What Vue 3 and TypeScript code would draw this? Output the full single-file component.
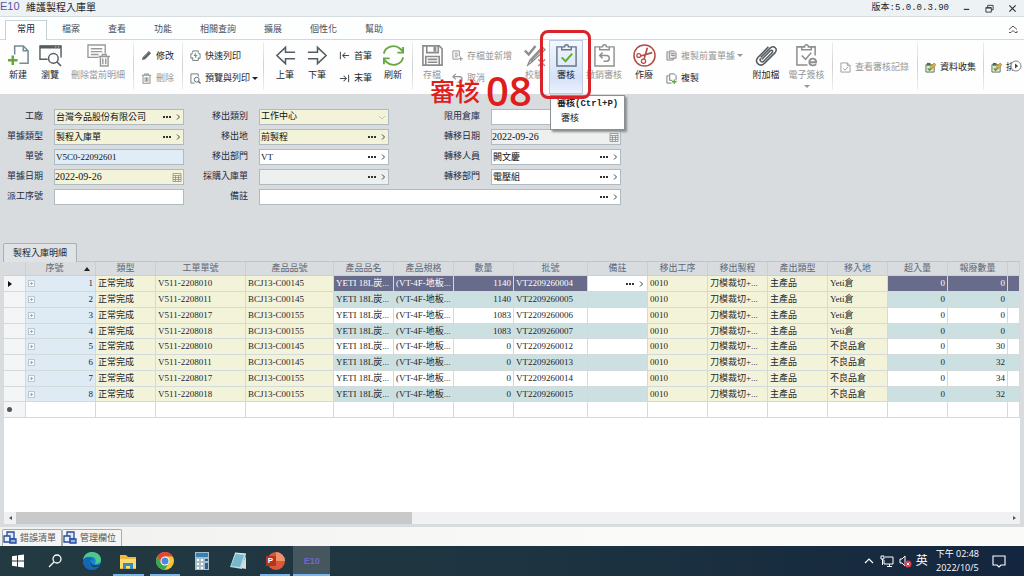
<script setup lang="ts">
import { ref } from 'vue'

interface Tool { label: string; icon?: string; off?: boolean; drop?: boolean; hot?: boolean }
interface Group { kind: 'big' | 'small' | 'sep'; size?: string; tools?: Tool[] }
interface Field {
  id: string
  label: string
  value: string
  type: 'lookup' | 'text' | 'date' | 'select'
  tone: string
  wide?: boolean
}

const menus = [
  { label: '檔案', size: 'm2' },
  { label: '查看', size: 'm2' },
  { label: '功能', size: 'm2' },
  { label: '相關查詢', size: 'm4' },
  { label: '擴展', size: 'm2' },
  { label: '個性化', size: 'm3' },
  { label: '幫助', size: 'm2' },
]

const ribbon: Group[] = [
  { kind: 'big', size: 'w32', tools: [{ label: '新建', icon: 'new' }] },
  { kind: 'big', size: 'w32', tools: [{ label: '瀏覽', icon: 'browse' }] },
  { kind: 'big', size: 'w64', tools: [{ label: '刪除當前明細', icon: 'deldetail', off: true }] },
  { kind: 'sep' },
  { kind: 'small', size: 'w40', tools: [{ label: '修改', icon: 'pencil' }, { label: '刪除', icon: 'trash', off: true }] },
  { kind: 'sep' },
  { kind: 'small', size: 'w72', tools: [{ label: '快速列印', icon: 'quick' }, { label: '預覽與列印', icon: 'preview', drop: true }] },
  { kind: 'sep' },
  { kind: 'big', size: 'w32', tools: [{ label: '上筆', icon: 'prev' }] },
  { kind: 'big', size: 'w32', tools: [{ label: '下筆', icon: 'next' }] },
  { kind: 'small', size: 'w44', tools: [{ label: '首筆', icon: 'first' }, { label: '末筆', icon: 'last' }] },
  { kind: 'big', size: 'w32', tools: [{ label: '刷新', icon: 'refresh' }] },
  { kind: 'sep' },
  { kind: 'big', size: 'w28', tools: [{ label: '存檔', icon: 'save', off: true }] },
  { kind: 'small', size: 'w74', tools: [{ label: '存檔並新增', icon: 'saveadd', off: true }, { label: '取消', icon: 'undo', off: true }] },
  { kind: 'big', size: 'w28', tools: [{ label: '校驗', icon: 'verify', off: true }] },
  { kind: 'big', size: 'w36', tools: [{ label: '審核', icon: 'approve', hot: true }] },
  { kind: 'big', size: 'w40', tools: [{ label: '撤銷審核', icon: 'revoke', off: true }] },
  { kind: 'big', size: 'w40', tools: [{ label: '作廢', icon: 'void' }] },
  { kind: 'small', size: 'w84', tools: [{ label: '複製前置單據', icon: 'copyprev', off: true, drop: true }, { label: '複製', icon: 'copy' }] },
  { kind: 'big', size: 'w36', tools: [{ label: '附加檔', icon: 'clip' }] },
  { kind: 'big', size: 'w45', tools: [{ label: '電子簽核', icon: 'esign', off: true, drop: true }] },
  { kind: 'sep' },
  { kind: 'small', size: 'w76', tools: [{ label: '查看審核記錄', icon: 'log', off: true }] },
  { kind: 'sep' },
  { kind: 'small', size: 'w57', tools: [{ label: '資料收集', icon: 'collect' }] },
  { kind: 'sep' },
  { kind: 'small', size: 'rest', tools: [{ label: '排', icon: 'collect' }] },
]

const fields = ref<Field[]>([
  { id: 'factory', label: '工廠', value: '台灣今品股份有限公司', type: 'lookup', tone: 'yellow' },
  { id: 'outkind', label: '移出類別', value: '工作中心', type: 'select', tone: 'yellow' },
  { id: 'limit', label: '限用倉庫', value: '', type: 'text', tone: 'white' },
  { id: 'doctype', label: '單據類型', value: '製程入庫單', type: 'lookup', tone: 'yellow' },
  { id: 'outplace', label: '移出地', value: '前製程', type: 'lookup', tone: 'yellow' },
  { id: 'movedate', label: '轉移日期', value: '2022-09-26', type: 'date', tone: 'grey' },
  { id: 'docno', label: '單號', value: 'V5C0-22092601', type: 'text', tone: 'blue' },
  { id: 'outdept', label: '移出部門', value: 'VT', type: 'lookup', tone: 'white' },
  { id: 'moveman', label: '轉移人員', value: '闕文慶', type: 'lookup', tone: 'white' },
  { id: 'docdate', label: '單據日期', value: '2022-09-26', type: 'date', tone: 'yellow' },
  { id: 'purchase', label: '採購入庫單', value: '', type: 'lookup', tone: 'grey' },
  { id: 'movedept', label: '轉移部門', value: '電壓組', type: 'lookup', tone: 'white' },
  { id: 'dispatch', label: '派工序號', value: '', type: 'text', tone: 'white' },
  { id: 'remark', label: '備註', value: '', type: 'lookup', tone: 'white', wide: true },
])

const heads = ['類型', '工單單號', '產品品號', '產品品名', '產品規格', '數量', '批號', '備註', '移出工序', '移出製程', '產出類型', '移入地', '超入量', '報廢數量']
const cols = ['ind', 'seq', 'std', 'order', 'item', 'std', 'std', 'std', 'lot', 'std', 'std', 'std', 'std', 'std', 'std', 'std', 'tail']
const rows = [
  ['V511-2208010', 'BCJ13-C00145', '1140', 'VT2209260004', 'Yeti倉', '0'],
  ['V511-2208011', 'BCJ13-C00145', '1140', 'VT2209260005', 'Yeti倉', '0'],
  ['V511-2208017', 'BCJ13-C00155', '1083', 'VT2209260006', 'Yeti倉', '0'],
  ['V511-2208018', 'BCJ13-C00155', '1083', 'VT2209260007', 'Yeti倉', '0'],
  ['V511-2208010', 'BCJ13-C00145', '0', 'VT2209260012', '不良品倉', '30'],
  ['V511-2208011', 'BCJ13-C00145', '0', 'VT2209260013', '不良品倉', '32'],
  ['V511-2208017', 'BCJ13-C00155', '0', 'VT2209260014', '不良品倉', '34'],
  ['V511-2208018', 'BCJ13-C00155', '0', 'VT2209260015', '不良品倉', '32'],
]
const apps = ['win', 'search', 'edge', 'explorer', 'chrome', 'calc', 'notes', 'ppt']
const running = ['explorer', 'chrome', 'ppt']
</script>

<template>
  <div class="window">
    <svg class="defs" aria-hidden="true">
      <symbol id="new" viewBox="0 0 24 24"><path d="M8 11V2h9l5 5v13H13M17 2v5h5" fill="none" stroke="#748a99" stroke-width="1.6" /><path d="M6 12v10M1 17h10" stroke="#65a839" stroke-width="2.6" /></symbol>
      <symbol id="browse" viewBox="0 0 24 24"><path d="M9 16H1V2h22v12" fill="none" stroke="#555d62" stroke-width="1.5" /><path d="M1 3.2h22" stroke="#555d62" stroke-width="3" /><path d="M17 3h1M20 3h1" stroke="#fff" /><circle cx="15" cy="15" r="5" fill="#fff" stroke="#555d62" stroke-width="1.5" /><path d="M18.500 18.500L23 23" stroke="#555d62" stroke-width="1.7" /></symbol>
      <symbol id="deldetail" viewBox="0 0 24 24"><path d="M12 14H1V1h18v9M4 5h12M4 8h12M4 11h8" fill="none" stroke="#999" stroke-width="1.4" /><path d="M12 13h12M16 13v-2h4v2M14 13v10h8V13M16.500 15v6M19.500 15v6" fill="none" stroke="#999" stroke-width="1.5" /></symbol>
      <symbol id="pencil" viewBox="0 0 12 12"><path d="M1 11l1-3.500L8.500 1 11 3.500 4.500 10z" fill="#5d6468" /><path d="M2.500 8l5.500-5.500" stroke="#b7bbbd" stroke-width=".7" /></symbol>
      <symbol id="trash" viewBox="0 0 12 12"><path d="M1 2.500h10M4 2.500V1h4v1.500M2.200 3v8.200h7.600V3M4.500 4.500v5M6 4.500v5M7.500 4.500v5" fill="none" stroke="#929292" stroke-width="1.1" /></symbol>
      <symbol id="quick" viewBox="0 0 12 12"><path d="M3 3V1h6v2M3 9H1V4h2M9 4h2v5H9M3 8v3.500h6V8" fill="none" stroke="#69757b" /><path d="M6.500 2.500L3.800 6.500h2L5.200 9.500 8.300 5.500H6.200z" fill="#62a83c" /></symbol>
      <symbol id="preview" viewBox="0 0 12 12"><path d="M5 11H1V1h8v3" fill="none" stroke="#69757b" /><circle cx="7.300" cy="7.300" r="2.600" fill="#fff" stroke="#59636a" /><path d="M9 9l2.500 2.500" stroke="#59636a" stroke-width="1.3" /></symbol>
      <symbol id="prev" viewBox="0 0 24 24"><path d="M22 8.500H12V3.500L3 12l9 8.500v-5h10" fill="none" stroke="#555d62" stroke-width="1.6" /></symbol>
      <symbol id="next" viewBox="0 0 24 24"><path d="M2 8.500h10V3.500l9 8.500-9 8.500v-5H2" fill="none" stroke="#555d62" stroke-width="1.6" /></symbol>
      <symbol id="first" viewBox="0 0 12 12"><path d="M1.500 2v8M11 6H4M7 3L4 6l3 3" fill="none" stroke="#444c52" stroke-width="1.1" /></symbol>
      <symbol id="last" viewBox="0 0 12 12"><path d="M10.500 2v8M1 6h7M5 3l3 3-3 3" fill="none" stroke="#444c52" stroke-width="1.1" /></symbol>
      <symbol id="refresh" viewBox="0 0 24 24"><path d="M2 10a10 9 0 0 1 17-5l3 3M22 3v6h-6M22 14a10 9 0 0 1-17 5l-3-3M2 21v-6h6" fill="none" stroke="#69a744" stroke-width="2" /></symbol>
      <symbol id="save" viewBox="0 0 24 24"><path d="M2 2h17l3 3v17H2zM6 2v7h12V2M5 22v-9h14v9M7 16h10M7 19h10" fill="none" stroke="#8c8c8c" stroke-width="1.700" /><path d="M13 3h3v5h-3z" fill="#8c8c8c" /></symbol>
      <symbol id="saveadd" viewBox="0 0 12 12"><path d="M7 10H1V1h7v6M3 3.500h3M3 5.500h4M3 7.500h3M9.500 7v5M7 9.500h5" fill="none" stroke="#8f8f8f" /></symbol>
      <symbol id="undo" viewBox="0 0 12 12"><path d="M4 1L1 4l3 3M1 4h7c4 0 4 6 0 6H6" fill="none" stroke="#8f8f8f" stroke-width="1.200" /></symbol>
      <symbol id="verify" viewBox="0 0 24 24"><path d="M2 7l4 4 7-9" fill="none" stroke="#8c8c8c" stroke-width="2.500" /><path d="M5 22l2-5L20 3l3 3L9 19zM8 18L21 4" fill="#ddd" stroke="#8c8c8c" stroke-width="1.300" /><path d="M16 16l7 7M23 16l-7 7" stroke="#b89090" stroke-width="1.700" /></symbol>
      <symbol id="approve" viewBox="0 0 24 24"><path d="M7 3H2v20h20V3h-5M7 5V3h3c0-3 4-3 4 0h3v3H7z" fill="none" stroke="#667685" stroke-width="1.500" /><path d="M7 14l4 4 7-8" fill="none" stroke="#5bb030" stroke-width="2" /></symbol>
      <symbol id="revoke" viewBox="0 0 24 24"><path d="M7 3H2v20h20V3h-5M7 5V3h3c0-3 4-3 4 0h3v3H7zM10 9l-3 3 3 3M7 12h7c4 0 4 6 0 6h-3" fill="none" stroke="#8f8f8f" stroke-width="1.500" /></symbol>
      <symbol id="void" viewBox="0 0 24 24"><circle cx="12" cy="12" r="11" fill="none" stroke="#b44c47" stroke-width="1.600" /><circle cx="6" cy="12" r="2" fill="none" stroke="#b44c47" stroke-width="1.300" /><circle cx="11" cy="18" r="2.200" fill="none" stroke="#b44c47" stroke-width="1.300" /><path d="M8 12.500L20 9M11.500 16L15 4" stroke="#b44c47" stroke-width="1.700" /></symbol>
      <symbol id="copyprev" viewBox="0 0 12 12"><path d="M3 2H1v9h7V9M4 1h5l2 2v6H4zM5.500 4h4M5.500 6h4" fill="#ddd" stroke="#8b8b8b" /></symbol>
      <symbol id="copy" viewBox="0 0 12 12"><path d="M3 3H1v8h5M4 3V1h5l2 2v5M4 3v5h3" fill="none" stroke="#68777f" /><path d="M9 7v5M6.500 9.500h5" stroke="#5fae36" stroke-width="1.500" /></symbol>
      <symbol id="clip" viewBox="0 0 24 24"><path d="M6 14L16 4c4-3 8 1 5 5L10 20c-5 5-11-1-7-6L14 3M7 16l9-9c2-1 3 0 2 2l-9 9c-2 2-5-1-3-3" fill="none" stroke="#565d63" stroke-width="1.600" /></symbol>
      <symbol id="esign" viewBox="0 0 24 24"><path d="M7 3H2v19h11M17 3h4v9M7 5V3h3c0-3 4-3 4 0h3v3H7zM7 12l4 4 6-7" fill="none" stroke="#8f8f8f" stroke-width="1.600" /><path d="M15 19h7c0-5-7-5-7 0 0 4 5 4 7 2" fill="none" stroke="#8f8f8f" stroke-width="2" /></symbol>
      <symbol id="log" viewBox="0 0 12 12"><path d="M1 1h7l3 3v7H1zM8 1v3h3M3.500 7l2 2 3-3.500" fill="none" stroke="#999" /></symbol>
      <symbol id="collect" viewBox="0 0 12 12"><path d="M1 3h9v8H1z" fill="#dfead9" stroke="#587452" /><path d="M2 1h4v3H2z" fill="#496f55" /><path d="M3 7l2 2 3-3" fill="none" stroke="#4c9942" stroke-width="1.400" /><path d="M5 8l1-3 4-4 2 2-4 4z" fill="#e3ae3e" stroke="#8b7144" stroke-width=".6" /></symbol>
      <symbol id="cal" viewBox="0 0 10 10"><path d="M1 1.500h8v8H1zM1 3.500h8M3.500 3.500v6M6.500 3.500v6M1 5.500h8M1 7.500h8" fill="none" stroke="#8f8f88" stroke-width=".8" /></symbol>
      <symbol id="panel" viewBox="0 0 14 14"><path d="M4 1h7v7H4z" fill="#dbe7fa" stroke="#284b9b" stroke-width="1.300" /><path d="M1 5h6v6H1z" fill="#e9f1ff" stroke="#284b9b" stroke-width="1.300" /><path d="M7 8h6v4H7z" fill="#91b2ea" stroke="#284b9b" stroke-width="1.300" /></symbol>
      <symbol id="win" viewBox="0 0 20 20"><path d="M4 5.200l5-.7v5H4zM10 4.300l6-.8v6h-6zM4 10.500h5v5l-5-.7zM10 10.500h6v6l-6-.8z" fill="#fff" /></symbol>
      <symbol id="search" viewBox="0 0 20 20"><circle cx="12" cy="8" r="4" fill="none" stroke="#fff" stroke-width="1.300" /><path d="M9 11l-5 5" stroke="#fff" stroke-width="1.300" /></symbol>
      <symbol id="edge" viewBox="0 0 20 20"><circle cx="10" cy="10" r="9" fill="#1684d0" /><path d="M1 9C2 3 6 1 10 1c6 0 9 4 9 8 0 3-3 4-6 4 2-5-1-8-5-7-3 0-6 1-7 3z" fill="#4fc78c" /><path d="M1 9c2-4 9-4 10 0-3-1-4 2-3 4 2 4 6 4 9 2-3 5-11 5-14 1C1 14 1 11 1 9z" fill="#1268b7" /><path d="M10 9c-2 1-1 4 1 5 3 1 6 0 7-1l-1 2c-3 2-7 1-8-1-1-2-1-4 1-5z" fill="#203a43" /></symbol>
      <symbol id="explorer" viewBox="0 0 20 20"><path d="M2 4h6l2 2h8v12H2z" fill="#efb93e" /><path d="M2 8h16v9H2z" fill="#ffda73" /><path d="M5 12h10v6h-3v-3H8v3H5z" fill="#318cc7" /></symbol>
      <symbol id="chrome" viewBox="0 0 20 20"><circle cx="10" cy="10" r="9" fill="#f5c831" /><path d="M2.200 5.500A9 9 0 0 1 17.800 5.500H10L6 12z" fill="#e1453a" /><path d="M2.200 5.500A9 9 0 0 0 9.500 19l4.500-7H6z" fill="#38a653" /><circle cx="10" cy="10" r="4.500" fill="#fff" /><circle cx="10" cy="10" r="3.500" fill="#4b89df" /></symbol>
      <symbol id="calc" viewBox="0 0 20 20"><path d="M3 1h14v18H3z" fill="#a9bbc6" /><path d="M4 2h12v4H4z" fill="#2f83b8" /><path d="M5 8h2v2H5zM9 8h2v2H9zM5 12h2v2H5zM9 12h2v2H9zM5 16h2v2H5zM9 16h2v2H9z" fill="#fff" /><path d="M13 8h3v2h-3zM13 12h3v6h-3z" fill="#275f8d" /></symbol>
      <symbol id="notes" viewBox="0 0 20 20"><path d="M7 2l11 1-4 15-12-2z" fill="#b8dce5" /><path d="M8 3l8 1-4 12-9-1z" fill="#78b8ca" /><path d="M18 5v13l-5-1z" fill="#d8ddda" /><path d="M7 2l11 1" stroke="#e9f3f3" /></symbol>
      <symbol id="ppt" viewBox="0 0 20 20"><circle cx="11" cy="10" r="9" fill="#d85b39" /><path d="M11 1a9 9 0 0 1 9 9h-9z" fill="#f0906d" /><path d="M1 5h10v10H1z" fill="#b7331f" /></symbol>
    </svg>

    <header class="titlebar">
      <span class="brand">E10</span>
      <h1>維護製程入庫單</h1>
      <span class="version">版本:5.0.0.3.90</span>
      <button class="win-btn" aria-label="最小化"><svg viewBox="0 0 10 10"><path d="M2 6h6" stroke="#333" stroke-width="1.300" /></svg></button>
      <button class="win-btn" aria-label="還原"><svg viewBox="0 0 10 10"><path d="M1 4h6v5H1zM3 4V1.500h6v5H7M1 4.500h6" fill="none" stroke="#333" /></svg></button>
      <button class="win-btn" aria-label="關閉"><svg viewBox="0 0 10 10"><path d="M1.500 1.500l7 7M8.500 1.500l-7 7" stroke="#333" stroke-width="1.300" /></svg></button>
    </header>

    <nav class="menu">
      <button class="current">常用</button>
      <button v-for="m in menus" :key="m.label" :class="m.size">{{ m.label }}</button>
      <button class="fold" aria-label="收合"><svg viewBox="0 0 10 10"><path d="M1 5.500L5 2l4 3.500M1 8.500h2L5 6.500l2 2h2V7" fill="none" stroke="#555" /></svg></button>
    </nav>

    <section class="ribbon">
      <template v-for="(g, i) in ribbon" :key="i">
        <span v-if="g.kind === 'sep'" class="sep"></span>
        <div v-else :class="['group', g.kind, g.size]">
          <button v-for="t in g.tools" :key="t.label" :class="{ off: t.off, hot: t.hot }" :disabled="t.off">
            <svg class="ico"><use :href="'#' + t.icon" /></svg>
            <span>{{ t.label }}</span>
            <i v-if="t.drop" class="caret"></i>
          </button>
        </div>
      </template>
      <button class="scroll-right" aria-label="更多"><svg viewBox="0 0 12 12"><circle cx="6" cy="6" r="5" fill="#fff" stroke="#888" /><path d="M5 3.500v5L8 6z" fill="#444" /></svg></button>
      <div class="frame"></div>
      <div class="note"><span>審核</span><b>08</b></div>
      <div class="tip" role="tooltip"><strong>審核(Ctrl+P)</strong><p>審核</p></div>
    </section>

    <form class="form" @submit.prevent>
      <template v-for="f in fields" :key="f.id">
        <label :for="f.id">{{ f.label }}</label>
        <div :class="['field', f.tone, f.type, { wide: f.wide }]">
          <select v-if="f.type === 'select'" :id="f.id" v-model="f.value"><option>{{ f.value }}</option></select>
          <input v-else :id="f.id" v-model="f.value" type="text" />
          <svg v-if="f.type === 'select'" class="chev"><path d="M1 3l3 3 3-3" fill="none" stroke="#c5c6ae" /></svg>
          <template v-if="f.type === 'lookup'">
            <button class="dots" type="button" aria-label="選擇"><i></i><i></i><i></i></button>
            <button class="go" type="button" aria-label="開啟"><svg viewBox="0 0 8 8"><path d="M3 1.500L5.500 4 3 6.500" fill="none" stroke="#444" /></svg></button>
          </template>
          <button v-if="f.type === 'date'" class="cal" type="button" aria-label="日曆"><svg><use href="#cal" /></svg></button>
        </div>
      </template>
    </form>

    <main class="detail">
      <div class="sheet-tabs"><button>製程入庫明細</button></div>
      <div class="grid">
        <table>
          <colgroup><col v-for="(c, i) in cols" :key="i" :class="c" /></colgroup>
          <thead>
            <tr>
              <th></th>
              <th class="seq-head">序號<i class="sort"></i></th>
              <th v-for="h in heads" :key="h">{{ h }}</th>
              <th></th>
            </tr>
          </thead>
          <tbody>
            <tr v-for="(r, i) in rows" :key="i" :class="{ selected: i === 0 }">
              <td class="ind"><i v-if="i === 0" class="arrow"></i></td>
              <td class="seq"><div><button class="plus" aria-label="展開"></button>{{ i + 1 }}</div></td>
              <td class="y">正常完成</td>
              <td class="y">{{ r[0] }}</td>
              <td class="y">{{ r[1] }}</td>
              <td>YETI 18L炭...</td>
              <td>(VT-4F-地板...</td>
              <td class="num">{{ r[2] }}</td>
              <td>{{ r[3] }}</td>
              <td class="memo">
                <div v-if="i === 0"><button class="dots" aria-label="選擇"><i></i><i></i><i></i></button><button class="go" aria-label="開啟"><svg viewBox="0 0 8 8"><path d="M3 1.500L5.500 4 3 6.500" fill="none" stroke="#444" /></svg></button></div>
              </td>
              <td class="y">0010</td>
              <td class="y">刀模裁切+...</td>
              <td class="y">主產品</td>
              <td class="y">{{ r[4] }}</td>
              <td class="num">0</td>
              <td class="num">{{ r[5] }}</td>
              <td></td>
            </tr>
            <tr class="blank">
              <td class="ind"><i class="star"></i></td>
              <td v-for="n in 16" :key="n"></td>
            </tr>
          </tbody>
        </table>
        <div class="void-area"></div>
        <div class="scroll">
          <button class="left" aria-label="向左"><i></i></button>
          <span class="thumb"></span>
          <button class="right" aria-label="向右"><i></i></button>
        </div>
      </div>
    </main>

    <div class="dock">
      <button><svg><use href="#panel" /></svg>錯誤清單</button>
      <button><svg><use href="#panel" /></svg>管理欄位</button>
    </div>

    <footer class="taskbar">
      <div class="apps">
        <button v-for="a in apps" :key="a" :class="{ running: running.includes(a) }" :aria-label="a">
          <svg><use :href="'#' + a" /></svg><b v-if="a === 'ppt'" class="p">P</b>
        </button>
        <button class="active running">E10</button>
      </div>
      <div class="tray">
        <svg viewBox="0 0 14 14"><path d="M3 9l4-4 4 4" fill="none" stroke="#fff" stroke-width="1.200" /></svg>
        <svg viewBox="0 0 14 14"><path d="M5 3h8v7H4V6M7 12.500h5M9.500 10v2.500M1 2h3v3H1zM2.500 5v6" fill="none" stroke="#fff" /></svg>
        <svg viewBox="0 0 14 14"><path d="M2 5h2l3-3v10L4 9H2z" fill="none" stroke="#fff" /><circle cx="10" cy="10" r="3.500" fill="#d33f49" /><path d="M8.700 8.700l2.600 2.600M11.300 8.700l-2.600 2.600" stroke="#fff" /></svg>
        <span class="ime">英</span>
        <div class="clock"><span>下午 02:48</span><span>2022/10/5</span></div>
        <svg class="msg" viewBox="0 0 14 14"><path d="M1 2h12v9H9l-2 2-2-2H1z" fill="none" stroke="#fff" stroke-width="1.100" /></svg>
      </div>
    </footer>
  </div>
</template>

<style>
body { margin: 0; }
</style>

<style scoped>
* { box-sizing: border-box; }
.window {
  display: flex;
  flex-direction: column;
  min-height: 100vh;
  overflow: hidden;
  background: #d8dcdf;
  color: #1c1f2c;
  font: 9px/14px "Liberation Sans", "Noto Sans CJK TC", sans-serif;
}
.defs { position: absolute; width: 0; height: 0; }
button { padding: 0; border: 0; background: none; color: inherit; font: inherit; white-space: nowrap; }
svg { display: block; flex: none; }

.titlebar { display: flex; align-items: center; height: 17px; background: #edf2f4; border-bottom: 1px solid #d5dcdf; }
.brand { width: 26px; font-size: 11px; line-height: 12px; color: #5c55a8; padding-bottom: 4px; }
h1 { margin: 0; flex: 1; font-size: 10px; font-weight: 400; }
.version { font-family: "Liberation Mono", "Noto Sans CJK TC", monospace; margin-right: 6px; }
.win-btn { width: 23px; height: 16px; display: flex; align-items: center; justify-content: center; }
.win-btn svg { width: 9px; height: 9px; }

.menu { display: flex; height: 23px; padding: 3px 0 0 5px; background: #fdfefe; border-bottom: 1px solid #cfdadc; color: #4c5059; }
.menu button { height: 17px; }
.menu .current { width: 42px; height: 20px; margin-right: 1px; padding-bottom: 3px; background: #fff; border: 1px solid #c5d2d4; border-bottom: 0; color: #1c2030; }
.m2 { width: 46px; }
.m3 { width: 55px; }
.m4 { width: 64px; }
.menu .fold { margin-left: auto; padding: 0 6px; }
.fold svg { width: 10px; height: 10px; }

.ribbon { position: relative; display: flex; height: 54px; padding-left: 2px; background: #fefefe; white-space: nowrap; }
.group { flex: none; display: flex; }
.group button { display: flex; align-items: center; }
.big button { width: 100%; flex-direction: column; justify-content: flex-start; padding-top: 4px; }
.big .ico { width: 23px; height: 23px; margin-bottom: 1px; }
.small { flex-direction: column; justify-content: space-evenly; }
.small button { gap: 4px; padding-left: 2px; height: 14px; }
.small .ico { width: 11px; height: 11px; }
.w44, .w74 { padding-left: 4px; }
.off { color: #979797; }
.w28 { width: 28px; } .w32 { width: 32px; } .w36 { width: 36px; } .w40 { width: 40px; }
.w44 { width: 44px; } .w45 { width: 45px; } .w57 { width: 57px; } .w64 { width: 64px; }
.w72 { width: 72px; } .w74 { width: 74px; } .w76 { width: 76px; } .w84 { width: 84px; }
.big span { display: flex; justify-content: center; }
.rest { flex: 1; min-width: 0; overflow: hidden; }
.sep { flex: none; width: 1px; margin: 2px 5px 4px 3px; background: linear-gradient(#eef0f0, #ccd2d4, #eef0f0); }
.hot { margin: 0 1px; background: linear-gradient(#f4f8ff, #d4e1f8 70%, #edf3fd); box-shadow: inset 0 0 0 1px #bccae2; }
.caret { border: 3px solid transparent; border-top-color: currentColor; border-bottom: 0; margin-left: -2px; }
.big .caret { margin: 3px 0 0; }
.scroll-right { position: absolute; right: 2px; top: 20px; }
.scroll-right svg { width: 12px; height: 12px; }
.frame { position: absolute; z-index: 3; left: 540px; top: -10px; width: 51px; height: 69px; border: 3px solid #d8232a; border-radius: 8px; }
.note { position: absolute; z-index: 2; left: 430px; top: 31px; display: flex; align-items: center; gap: 6px; height: 40px; color: #df1d1d; font-family: "Open Sans", "Noto Sans CJK TC", sans-serif; }
.note span { font-size: 25px; font-weight: 500; line-height: 40px; }
.note b { font-size: 40px; font-weight: 600; line-height: 40px; }
.tip { position: absolute; z-index: 2; left: 550px; top: 55px; width: 75px; height: 35px; padding: 1px 6px; background: #fff; border: 1px solid #8b8f92; box-shadow: 2px 2px 2px #8a8e91; font-family: "Liberation Mono", "Noto Sans CJK TC", monospace; }
.tip p { margin: 1px 0 0 4px; }

.form { display: grid; grid-template-columns: 43px 130px 53px 130px 80px 130px; grid-auto-rows: 16px; gap: 4px 11px; padding: 15px 0 38px; }
.form label { text-align: right; color: #262b3f; white-space: nowrap; }
.field { display: flex; align-items: center; min-width: 0; border: 1px solid #b0bbc1; background: #fff; }
.wide { grid-column: span 3; }
.field input, .field select { flex: 1; min-width: 0; height: 14px; padding: 0 1px 1px; border: 0; outline: 0; background: none; appearance: none; color: #111; font: 9px/13px "Liberation Serif", "Noto Sans CJK TC", serif; }
.date input { padding: 0 0 1px; font-size: 10px; }
.yellow { background: #f3f3da; }
.blue { background: #e0ecf6; }
.grey { background: #eeefef; }
.dots { display: flex; gap: 1px; width: 12px; justify-content: center; }
.dots i { width: 2px; height: 2px; background: #333; }
.go { width: 10px; display: flex; justify-content: center; }
.go svg, .chev { width: 8px; height: 8px; }
.chev { margin-right: 2px; }
.cal svg { width: 10px; height: 10px; }
.cal { margin-right: 1px; }

.detail { flex: 1; display: flex; flex-direction: column; padding: 0 4px 3px; }
.sheet-tabs { display: flex; height: 19px; margin-left: -1px; border-bottom: 1px solid #bfc6ca; }
.sheet-tabs button { width: 74px; height: 19px; background: #dfe3e5; border: 1px solid #a9b1b6; border-bottom: 0; border-radius: 2px 2px 0 0; }
.grid { flex: 1; display: flex; flex-direction: column; }
table { width: 100%; table-layout: fixed; border-collapse: separate; border-spacing: 0; white-space: nowrap; font-family: "Liberation Serif", "Noto Sans CJK TC", serif; }
col.ind { width: 22px; } col.seq { width: 70px; } col.std { width: 60px; } col.order { width: 90px; }
col.item { width: 88px; } col.lot { width: 74px; } col.tail { width: 12px; }
th, td { height: 16px; padding: 0 2px; border-right: 1px solid #d3dadc; border-bottom: 1px solid #d3dadc; line-height: 14px; vertical-align: top; overflow: hidden; }
th { height: 14px; line-height: 13px; font-weight: 400; background: #d8dcdf; color: #5d6676; border-color: #c9cfd3; text-align: center; }
tr:nth-child(4n) td { height: 15px; }
td { background: #fff; }
tr:nth-child(even) td { background: #cce0e1; }
tr:nth-child(n) td.y { background: #f3f3da; }
tr:nth-child(n) td.seq { background: #deebf5; }
tr:nth-child(n) td.ind { background: #f4f5f7; vertical-align: middle; }
tr.selected td { background: #696b8b; color: #fff; }
tr.selected td.y, tr.selected td.seq { color: #1c1f2c; }
tr.selected td.memo { background: #fff; }
tr.blank td { background: #fff; }
.num { text-align: right; }
.seq-head { position: relative; padding-right: 14px; }
.sort { position: absolute; right: 5px; top: 5px; border: 3px solid transparent; border-bottom: 4px solid #222; border-top: 0; }
.seq div { display: flex; justify-content: space-between; }
.plus { width: 7px; height: 7px; margin: 4px 0 0; border: 1px solid #bcc6cc; background: linear-gradient(#a4adb3, #a4adb3) center / 3px 1px no-repeat, linear-gradient(#a4adb3, #a4adb3) center / 1px 3px no-repeat, #f4f8fa; }
.memo div { display: flex; align-items: center; justify-content: flex-end; height: 15px; }
.memo .dots { margin-right: 1px; }
.memo .go { width: 8px; }
.arrow { display: block; margin-left: 2px; width: 0; border: 3px solid transparent; border-left: 4px solid #111; border-right: 0; }
.star { display: block; width: 5px; height: 5px; margin-left: 1px; border-radius: 50%; background: #555; }
.void-area { flex: 1; background: #fff; }
.scroll { display: flex; height: 12px; background: #f1f1f3; }
.scroll button { width: 12px; display: flex; align-items: center; justify-content: center; }
.thumb { width: 39%; background: #c9c9c9; }
.scroll .right { margin-left: auto; }
.scroll i { border: 2px solid transparent; }
.scroll .left i { border-right: 3px solid #555; border-left: 0; }
.scroll .right i { border-left: 3px solid #555; border-right: 0; }

.dock { display: flex; height: 19px; padding: 2px 0 0 2px; background: linear-gradient(90deg, #f0f0ef, #fafaf8 60%); color: #555; }
.dock button { display: flex; align-items: center; gap: 3px; width: 60px; border: 1px solid #a9abad; border-bottom: 0; border-radius: 2px 2px 0 0; background: #f4f4f3; }
.dock svg { width: 14px; height: 14px; }

.taskbar { display: flex; justify-content: space-between; height: 30px; background: linear-gradient(90deg, #233a42, #1e3440 50%, #14263f); color: #fff; }
.apps { display: grid; grid-template-columns: repeat(9, 1fr); width: 330px; }
.apps button { position: relative; display: flex; align-items: center; justify-content: center; }
.apps svg { width: 20px; height: 20px; }
.running::after { content: ""; position: absolute; left: 3px; right: 3px; bottom: 0; height: 2px; background: #79b5ed; }
.p { position: absolute; left: 11px; top: 8px; font-size: 8px; }
.apps .active { background: #45565f; color: #7167c9; font-size: 9px; font-weight: 700; }
.active::after { left: 0; right: 0; }
.tray { display: flex; align-items: center; gap: 4px; padding-right: 18px; font-family: "Open Sans", "Noto Sans CJK TC", sans-serif; }
.tray svg { width: 14px; height: 14px; }
.ime { font-size: 12px; }
.clock { display: flex; flex-direction: column; align-items: center; margin: 0 9px 0 4px; }
</style>
